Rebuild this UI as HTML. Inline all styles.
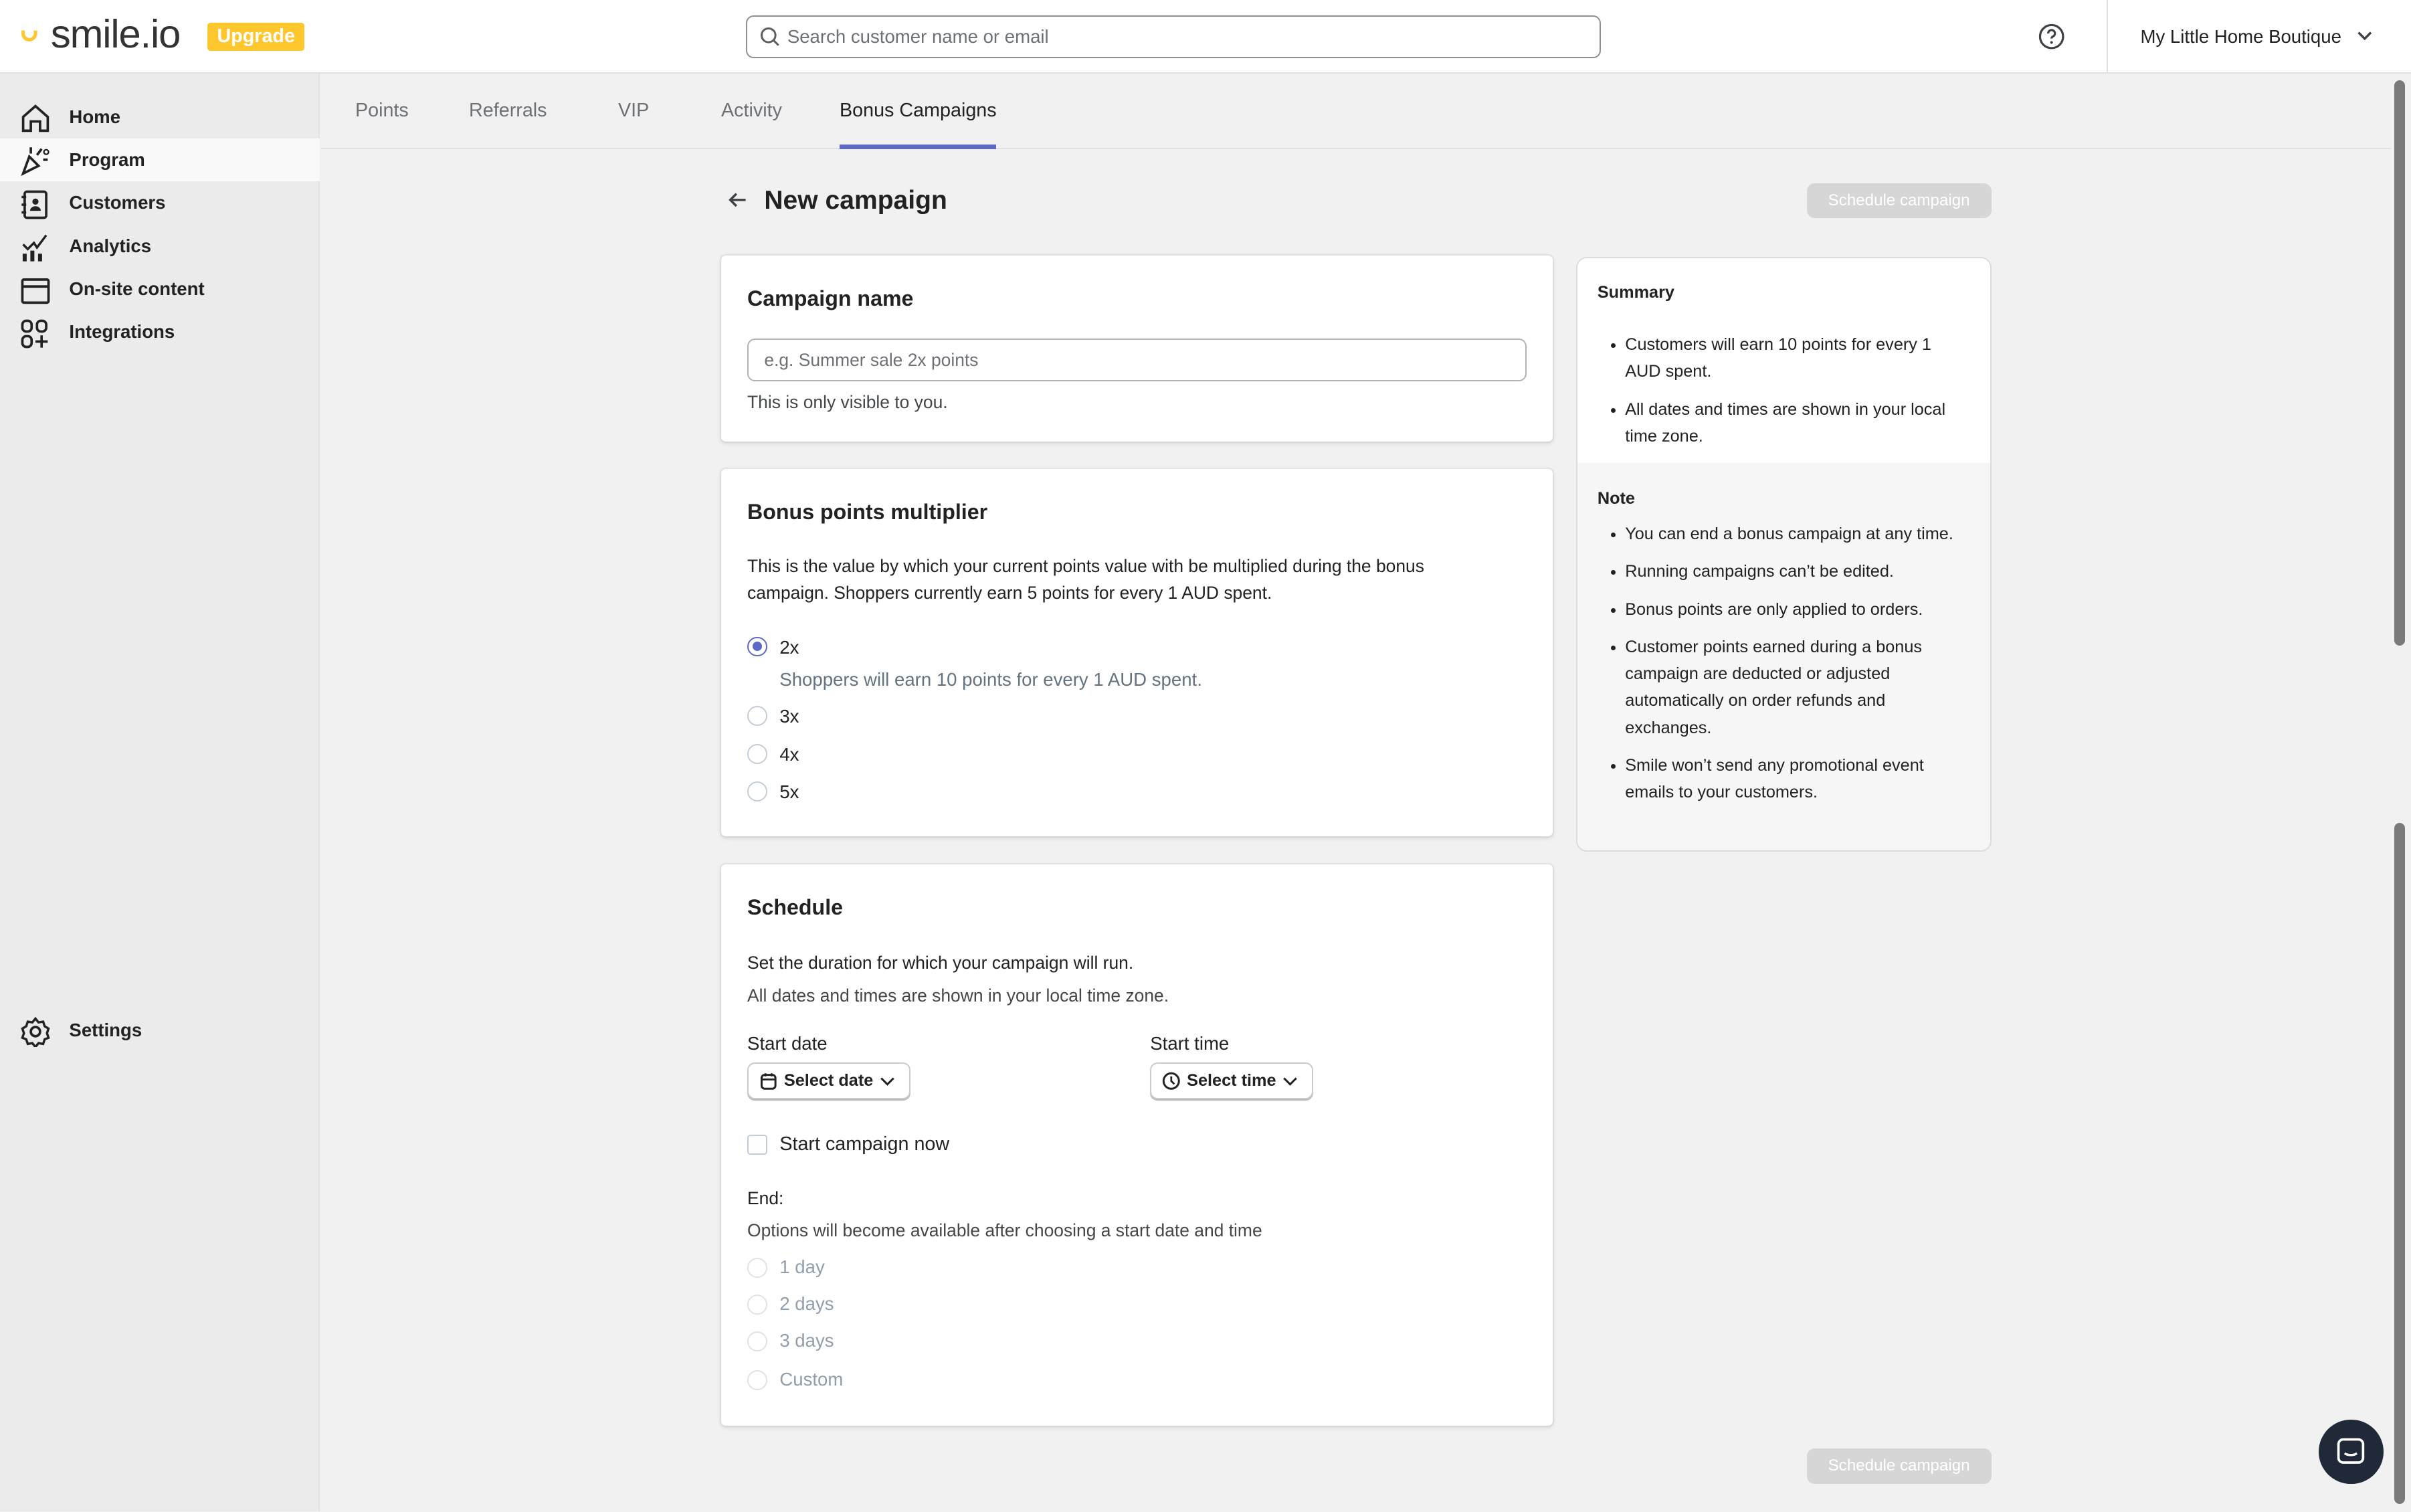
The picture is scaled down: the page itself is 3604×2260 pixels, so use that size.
<!DOCTYPE html>
<html><head><meta charset="utf-8"><style>
*{box-sizing:border-box;margin:0;padding:0}
html,body{width:3604px;height:2260px;overflow:hidden;background:#f1f1f1}
#r{zoom:2.2985;width:1568px;height:983px;position:relative;font-family:"Liberation Sans",sans-serif;color:#202223;font-size:12px}
.a{position:absolute}
.hdr{left:0;top:0;width:1568px;height:48px;background:#fff;border-bottom:1px solid #e1e1e1}
.side{left:0;top:48px;width:208px;height:935px;background:#ebebeb;border-right:1px solid #e3e3e3}
.nav{position:absolute;left:0;width:208px;height:28px;display:flex;align-items:center;padding-left:45px;font-size:12px;font-weight:bold;color:#202223}
.nav svg{position:absolute;left:13px;top:5px}
.tab{position:absolute;top:65px;font-size:12.5px;color:#6d7175}
.card{position:absolute;left:469px;width:541px;background:#fff;border-radius:3px;box-shadow:0 0 0 1px rgba(63,63,68,.05),0 1px 3px rgba(63,63,68,.15)}
.h{position:absolute;left:17px;font-size:14px;font-weight:bold}
.t{position:absolute;left:17px;font-size:11.5px;color:#202223;line-height:17px}
.rad{position:absolute;left:17px;width:13px;height:13px;border:1px solid #c4cdd5;border-radius:50%;background:#fff}
.rl{position:absolute;left:38px;font-size:12px}
.btn{position:absolute;left:1175px;width:120px;height:23px;background:#d6d6d6;border-radius:5px;color:#fff;font-size:10.5px;text-align:center;line-height:23px}
.sel{position:absolute;height:24px;border:1px solid #c9cccf;border-radius:5px;box-shadow:0 1px 0 #bbb;background:#fff;font-size:11px;font-weight:bold;display:flex;align-items:center;padding-left:7px;gap:4px}
ul{list-style:disc;padding-left:31px;padding-right:22px;font-size:11px;line-height:17.5px}
li{margin-bottom:7px}
</style></head><body><div id="r">
<div class="a hdr"></div>
<svg class="a" style="left:13px;top:18px" width="12" height="10"><path d="M2 2v2a4 4 0 0 0 8 0V2" stroke="#fec72e" stroke-width="2.2" fill="none"/></svg>
<div class="a" style="left:33px;top:7px;font-size:26px;color:#333;letter-spacing:-.5px">smile.io</div>
<div class="a" style="left:135px;top:15px;width:63px;height:18px;background:#fec72e;border-radius:2px;color:#fff;font-size:12.5px;font-weight:bold;text-align:center;line-height:18px">Upgrade</div>
<div class="a" style="left:485px;top:10px;width:556px;height:28px;border:1px solid #8c9196;border-radius:5px;background:#fff"></div>
<svg class="a" style="left:494px;top:17px" width="14" height="14"><circle cx="6" cy="6" r="4.5" stroke="#5c5f62" stroke-width="1.3" fill="none"/><path d="M9.5 9.5l3 3" stroke="#5c5f62" stroke-width="1.3"/></svg>
<div class="a" style="left:512px;top:17px;font-size:12px;color:#6d7175">Search customer name or email</div>
<svg class="a" style="left:1325px;top:15px" width="18" height="18"><circle cx="9" cy="9" r="7.5" stroke="#3d4148" stroke-width="1.4" fill="none"/><path d="M6.8 7a2.2 2.2 0 1 1 3 2c-.6.3-.8.7-.8 1.3" stroke="#3d4148" stroke-width="1.4" fill="none"/><circle cx="9" cy="12.8" r=".9" fill="#3d4148"/></svg>
<div class="a" style="left:1370px;top:0;width:1px;height:48px;background:#e1e1e1"></div>
<div class="a" style="left:1392px;top:17px;font-size:12px;color:#202223">My Little Home Boutique</div>
<svg class="a" style="left:1532px;top:19px" width="12" height="10"><path d="M2 2l4 4 4-4" stroke="#3d4148" stroke-width="1.5" fill="none"/></svg>

<div class="a side"></div>
<div class="nav" style="top:62px"><svg width="20" height="20"><path d="M2 18V9l8-7 8 7v9h-5v-6H7v6z" stroke="#202223" stroke-width="1.6" fill="none"/></svg>Home</div>
<div class="nav" style="top:90px;background:#f9f9f9"><svg width="20" height="20"><path d="M2 18l4-11 6 6z" stroke="#202223" stroke-width="1.6" fill="none"/><path d="M7 1v4M11 6l3-4M15 9h3" stroke="#202223" stroke-width="1.6"/><circle cx="17" cy="4" r="1.5" stroke="#202223" fill="none"/></svg>Program</div>
<div class="nav" style="top:118px"><svg width="20" height="20"><rect x="3" y="1.5" width="14" height="17" rx="1.5" stroke="#202223" stroke-width="1.6" fill="none"/><circle cx="10" cy="8" r="2" fill="#202223"/><path d="M6.5 14a3.5 3 0 0 1 7 0z" fill="#202223"/><path d="M1 5h3M1 10h3M1 15h3" stroke="#202223" stroke-width="1.5"/></svg>Customers</div>
<div class="nav" style="top:146px"><svg width="20" height="20"><path d="M2 8l3 3 4-4 2 3 6-8" stroke="#202223" stroke-width="1.5" fill="none"/><path d="M3 14v5M8 12v7M13 14v5" stroke="#202223" stroke-width="2.6"/></svg>Analytics</div>
<div class="nav" style="top:174px"><svg width="20" height="20"><rect x="1.5" y="3" width="17" height="15" rx="1" stroke="#202223" stroke-width="1.6" fill="none"/><path d="M1.5 7.5h17" stroke="#202223" stroke-width="1.6"/></svg>On-site content</div>
<div class="nav" style="top:202px"><svg width="20" height="20"><rect x="1.5" y="1.5" width="6" height="7" rx="2.5" stroke="#202223" stroke-width="1.6" fill="none"/><rect x="11" y="1.5" width="6" height="7" rx="2.5" stroke="#202223" stroke-width="1.6" fill="none"/><rect x="1.5" y="11.5" width="6" height="7" rx="2.5" stroke="#202223" stroke-width="1.6" fill="none"/><path d="M14 11v8M10 15h8" stroke="#202223" stroke-width="1.6"/></svg>Integrations</div>
<div class="nav" style="top:656px"><svg width="20" height="20"><circle cx="10" cy="10" r="3" stroke="#202223" stroke-width="1.6" fill="none"/><path d="M10 1.5l2 2.5 3-.5 1 3 2.5 1.5-1 3 1 3-2.5 1-1 3-3-.5-2 2.5-2-2.5-3 .5-1-3-2.5-1 1-3-1-3 2.5-1.5 1-3 3 .5z" stroke="#202223" stroke-width="1.5" fill="none"/></svg>Settings</div>

<div class="a" style="left:209px;top:96px;width:1346px;height:1px;background:#dfe3e8"></div>
<div class="tab" style="left:231px">Points</div>
<div class="tab" style="left:305px">Referrals</div>
<div class="tab" style="left:402px">VIP</div>
<div class="tab" style="left:469px">Activity</div>
<div class="tab" style="left:546px;color:#202223">Bonus Campaigns</div>
<div class="a" style="left:546px;top:94px;width:102px;height:3px;background:#5c6ac4"></div>

<svg class="a" style="left:473px;top:124px" width="14" height="12"><path d="M12 6H2M6 2L2 6l4 4" stroke="#3d4148" stroke-width="1.5" fill="none"/></svg>
<div class="a" style="left:497px;top:121px;font-size:17px;font-weight:bold">New campaign</div>
<div class="btn" style="top:119px">Schedule campaign</div>
<div class="btn" style="top:942px">Schedule campaign</div>

<div class="card" style="top:166px;height:121px">
<div class="h" style="top:20px">Campaign name</div>
<div class="a" style="left:17px;top:54px;width:507px;height:28px;border:1px solid #aeb4b9;border-radius:5px"></div>
<div class="t" style="left:28px;top:60px;color:#6d7175">e.g. Summer sale 2x points</div>
<div class="t" style="top:87px;color:#44474a">This is only visible to you.</div>
</div>

<div class="card" style="top:305px;height:239px">
<div class="h" style="top:20px">Bonus points multiplier</div>
<div class="t" style="top:55px">This is the value by which your current points value with be multiplied during the bonus<br>campaign. Shoppers currently earn 5 points for every 1 AUD spent.</div>
<div class="rad" style="top:109px;border-color:#5c6ac4"><div style="position:absolute;left:2.5px;top:2.5px;width:6px;height:6px;border-radius:50%;background:#5c6ac4"></div></div>
<div class="rl" style="top:109px">2x</div>
<div class="rl" style="top:130px;color:#637381">Shoppers will earn 10 points for every 1 AUD spent.</div>
<div class="rad" style="top:154px"></div><div class="rl" style="top:154px">3x</div>
<div class="rad" style="top:179px"></div><div class="rl" style="top:179px">4x</div>
<div class="rad" style="top:203px"></div><div class="rl" style="top:203px">5x</div>
</div>

<div class="card" style="top:562px;height:365px">
<div class="h" style="top:20px">Schedule</div>
<div class="t" style="top:56px">Set the duration for which your campaign will run.</div>
<div class="t" style="top:77px;color:#44474a">All dates and times are shown in your local time zone.</div>
<div class="t" style="top:108px;font-size:12px">Start date</div>
<div class="t" style="left:279px;top:108px;font-size:12px">Start time</div>
<div class="sel" style="left:17px;top:129px;width:106px"><svg width="12" height="12"><rect x="1.5" y="2" width="9" height="9" rx="2" stroke="#202223" stroke-width="1.3" fill="none"/><path d="M1.5 5h9M4 1v2M8 1v2" stroke="#202223" stroke-width="1.2"/></svg>Select date<svg width="10" height="8"><path d="M1 2l4 4 4-4" stroke="#202223" stroke-width="1.3" fill="none"/></svg></div>
<div class="sel" style="left:279px;top:129px;width:106px"><svg width="12" height="12"><circle cx="6" cy="6" r="5" stroke="#202223" stroke-width="1.3" fill="none"/><path d="M6 3v3l2 2" stroke="#202223" stroke-width="1.2" fill="none"/></svg>Select time<svg width="10" height="8"><path d="M1 2l4 4 4-4" stroke="#202223" stroke-width="1.3" fill="none"/></svg></div>
<div class="a" style="left:17px;top:176px;width:13px;height:13px;border:1px solid #c4cdd5;border-radius:2px"></div>
<div class="rl" style="top:175px;font-size:12.5px">Start campaign now</div>
<div class="t" style="top:209px">End:</div>
<div class="t" style="top:230px;color:#44474a">Options will become available after choosing a start date and time</div>
<div class="rad" style="top:256px;border-color:#dfe3e8"></div><div class="rl" style="top:255px;color:#919eab">1 day</div>
<div class="rad" style="top:280px;border-color:#dfe3e8"></div><div class="rl" style="top:279px;color:#919eab">2 days</div>
<div class="rad" style="top:304px;border-color:#dfe3e8"></div><div class="rl" style="top:303px;color:#919eab">3 days</div>
<div class="rad" style="top:329px;border-color:#dfe3e8"></div><div class="rl" style="top:328px;color:#919eab">Custom</div>
</div>

<div class="a" style="left:1025px;top:167px;width:270px;height:387px;border:1px solid #dcdcdc;border-radius:7px;background:#f6f6f6;overflow:hidden">
<div style="background:#fff;height:133px;padding-top:16px"><div style="padding-left:13px;font-size:11px;font-weight:bold;margin-bottom:19px">Summary</div>
<ul><li>Customers will earn 10 points for every 1 AUD spent.</li><li>All dates and times are shown in your local time zone.</li></ul></div>
<div style="padding-top:17px"><div style="padding-left:13px;font-size:11px;font-weight:bold;margin-bottom:8px">Note</div>
<ul><li>You can end a bonus campaign at any time.</li><li>Running campaigns can’t be edited.</li><li>Bonus points are only applied to orders.</li><li>Customer points earned during a bonus campaign are deducted or adjusted automatically on order refunds and exchanges.</li><li>Smile won’t send any promotional event emails to your customers.</li></ul></div>
</div>

<div class="a" style="left:1557px;top:52px;width:7px;height:368px;background:#7a7a7a;border-radius:4px"></div>
<div class="a" style="left:1557px;top:535px;width:7px;height:443px;background:#7a7a7a;border-radius:4px"></div>
<div class="a" style="left:1508px;top:923px;width:42px;height:42px;border-radius:50%;background:#1f2937"></div>
<svg class="a" style="left:1519px;top:934px" width="20" height="20"><rect x="2" y="2" width="16" height="15" rx="3" stroke="#fff" stroke-width="1.6" fill="none"/><path d="M6 11c2 1.5 6 1.5 8 0" stroke="#fff" stroke-width="1.5" fill="none"/></svg>
</div></body></html>
